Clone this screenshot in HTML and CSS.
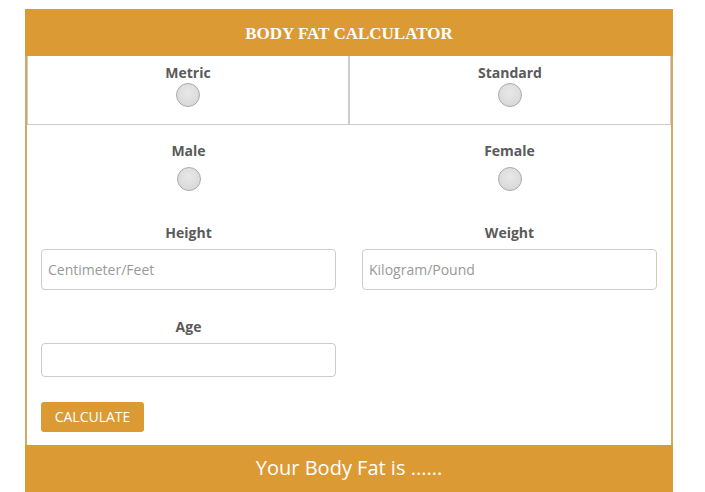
FILE: index.html
```html
<!DOCTYPE html>
<html lang="en">
<head>
    <meta charset="UTF-8">
    <meta name="viewport" content="width=device-width, initial-scale=1.0">
    <title>Body Fat Calculator</title>
    <link rel="stylesheet" href="styles.css">
</head>
<body>
    <div class="calc">
        <h1 class="calc-title">BODY FAT CALCULATOR</h1>

        <div class="calc-body">
            <div class="units">
                <label class="unit">
                    <span>Metric</span>
                    <input type="radio" name="unit" value="metric">
                </label>
                <label class="unit">
                    <span>Standard</span>
                    <input type="radio" name="unit" value="standard">
                </label>
            </div>

            <div class="fields">
                <label class="field gender">
                    <span>Male</span>
                    <input type="radio" name="gender" value="male">
                </label>
                <label class="field gender">
                    <span>Female</span>
                    <input type="radio" name="gender" value="female">
                </label>

                <label class="field">
                    <span>Height</span>
                    <input type="text" class="tall" id="height" placeholder="Centimeter/Feet">
                </label>
                <label class="field">
                    <span>Weight</span>
                    <input type="text" class="tall" id="weight" placeholder="Kilogram/Pound">
                </label>

                <label class="field age">
                    <span>Age</span>
                    <input type="text" id="age">
                </label>
            </div>

            <button class="calc-btn">CALCULATE</button>
        </div>

        <div class="result">Your Body Fat is ......</div>
    </div>
</body>
</html>
```

FILE: styles.css
```css
* {
    box-sizing: border-box;
}

body {
    margin: 0;
    padding: 0;
    background: #fff;
    font-family: 'Open Sans', sans-serif;
    color: #555;
}

.calc {
    width: 648px;
    margin: 9px 0 0 25px;
}

.calc-title {
    margin: 0;
    height: 47px;
    padding-top: 2px;
    line-height: 45px;
    background: #dc9a35;
    color: #fff;
    text-align: center;
    font-family: 'Liberation Serif', serif;
    font-size: 17px;
    font-weight: bold;
}

.calc-body {
    border-left: 2px solid #d4a95e;
    border-right: 2px solid #d4a95e;
    padding-bottom: 13px;
}

.units {
    display: flex;
}

.unit {
    flex: 1;
    display: flex;
    flex-direction: column;
    align-items: center;
    height: 69px;
    padding-top: 7px;
    border: 1px solid #ccc;
    border-top: none;
}

.unit span,
.field span {
    font-size: 14px;
    font-weight: bold;
    line-height: 20px;
    color: #5a5a5a;
}

input[type="radio"] {
    appearance: none;
    -webkit-appearance: none;
    width: 24px;
    height: 24px;
    margin: 0;
    border: 1px solid #aaa;
    border-radius: 50%;
    background: radial-gradient(circle at 50% 40%, #e8e8e8 0%, #dadada 70%, #cfcfcf 100%);
}

.fields {
    display: grid;
    grid-template-columns: 1fr 1fr;
    column-gap: 26px;
    padding: 16px 14px 0;
}

.field {
    display: flex;
    flex-direction: column;
    align-items: center;
    margin-bottom: 32px;
}

.field.gender input {
    margin-top: 6px;
}

.field input[type="text"] {
    width: 100%;
    height: 34px;
    margin-top: 6px;
    padding: 0 6px;
    border: 1px solid #ccc;
    border-radius: 4px;
    font-family: 'Open Sans', sans-serif;
    font-size: 14px;
    color: #555;
}

.field input.tall {
    height: 41px;
}

.field input::placeholder {
    color: #999;
}

.field:nth-child(3),
.field:nth-child(4) {
    margin-bottom: 27px;
}

.field.age {
    margin-bottom: 25px;
}

.calc-btn {
    margin-left: 14px;
    width: 103px;
    height: 30px;
    padding: 0 0 1px;
    border: none;
    border-radius: 3px;
    background: #dc9a35;
    color: #fff;
    font-family: 'Open Sans', sans-serif;
    font-size: 14px;
    cursor: pointer;
}

.result {
    height: 47px;
    line-height: 46px;
    background: #dc9a35;
    color: #fff;
    text-align: center;
    font-size: 20px;
}
```
